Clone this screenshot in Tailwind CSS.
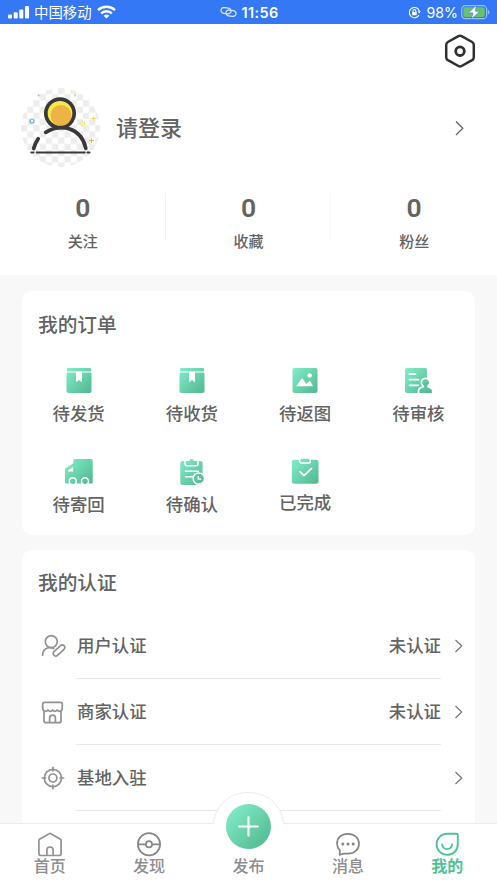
<!DOCTYPE html>
<html lang="zh-CN">
<head>
<meta charset="utf-8">
<meta name="viewport" content="width=device-width, initial-scale=1">
<title>我的</title>
<script src="https://cdn.jsdelivr.net/npm/@tailwindcss/browser@4"></script>
</head>
<body class="h-[883px] overflow-hidden bg-[#f8f8f8] font-['Noto_Sans_CJK_SC',sans-serif] font-medium text-[#636363]">
<svg class="absolute size-0" aria-hidden="true">
  <defs>
    <linearGradient id="g" x1="0" y1="0" x2="28" y2="28" gradientUnits="userSpaceOnUse"><stop offset="0.1" stop-color="#80ebc8"/><stop offset="0.9" stop-color="#54bb92"/></linearGradient>
    <pattern id="chk" width="12.4" height="12.4" patternUnits="userSpaceOnUse"><rect width="12.4" height="12.4" fill="#fff"/><path d="M0 0h6.2v6.2H0zM6.2 6.2h6.2v6.2H6.2z" fill="#ededed"/></pattern>
    <clipPath id="av"><circle cx="39.5" cy="39.5" r="39.5"/></clipPath>
  </defs>
</svg>
<div class="relative flex h-[883px] flex-col overflow-hidden">
  <!-- status bar -->
  <div class="flex h-6 shrink-0 items-center bg-[#3478f6] text-white">
    <div class="flex flex-1 items-center pl-2">
      <svg class="h-[13px] w-[21px]" viewBox="0 0 21 13" fill="#fff"><rect x="0" y="8.5" width="4" height="4" rx="1"/><rect x="5.7" y="6.3" width="4" height="6.2" rx="1"/><rect x="11.3" y="3.6" width="4" height="8.9" rx="1"/><rect x="17" y="0" width="4" height="12.5" rx="1"/></svg>
      <span class="ml-[5px] text-[14.4px] leading-6 font-normal">中国移动</span>
      <svg class="ml-[5px] h-[14px] w-[19px]" viewBox="0 0 19 14" fill="none" stroke="#fff" stroke-width="2.5"><path d="M1 5.2a12.3 12.3 0 0 1 17 0M4.2 8.4a7.6 7.6 0 0 1 10.6 0"/><path d="M9.5 13.6 6.6 10.8a4.2 4.2 0 0 1 5.8 0z" fill="#fff" stroke="none"/></svg>
    </div>
    <div class="flex items-center gap-[5px]">
      <svg class="h-[10px] w-[17px]" viewBox="0 0 17 10" fill="none" stroke="#d5e3fd" stroke-width="1.3"><rect x="-5" y="-2.9" width="10" height="5.8" rx="2.9" transform="translate(6 3.7) rotate(8)"/><rect x="-5" y="-2.9" width="10" height="5.8" rx="2.9" transform="translate(11 6.2) rotate(8)"/></svg>
      <span class="pt-px font-['Inter',sans-serif] text-[14.4px] leading-[23px] font-semibold tracking-[0.4px]">11:56</span>
    </div>
    <div class="flex flex-1 items-center justify-end pr-[7px]">
      <svg class="h-[13px] w-[13px]" viewBox="0 0 13 13" fill="none" stroke="#fff" stroke-width="1.1"><path d="M11 8.9A5.1 5.1 0 1 1 11.3 5"/><path d="M9.4 5.2h3.4l-1.5 2.4z" fill="#fff" stroke="none"/><rect x="4.1" y="5.9" width="4.6" height="3.4" rx=".5" fill="#fff" stroke="none"/><path d="M5 6V4.9a1.4 1.4 0 0 1 2.8 0V6"/></svg>
      <span class="ml-1.5 pt-px font-['Inter',sans-serif] text-[14.2px] leading-[23px] font-normal">98%</span>
      <svg class="ml-[3px] h-[16px] w-[29px]" viewBox="0 0 29 16" fill="none"><rect x=".7" y="1.7" width="25" height="13" rx="3.8" stroke="#9dbffb" stroke-width="1.2"/><rect x="2.3" y="3.3" width="21.4" height="9.8" rx="2.3" fill="#65c466"/><path d="M27 6v4.5q1.4-.6 1.4-2.2T27 6z" fill="#9dbffb"/><path d="M15.4 1.2 7.3 9h4.7l-1.6 6L18.9 7.2h-4.6z" fill="#fff" stroke="#3478f6" stroke-width=".6"/></svg>
    </div>
  </div>

  <!-- profile -->
  <header class="h-[251px] shrink-0 bg-white">
    <div class="flex h-[64px] justify-end pt-[10px] pr-[20px]">
      <svg class="size-[34px]" viewBox="0 0 34 34" fill="none" stroke="#303030"><path d="M15.4 2.2q1.6-.9 3.2 0l10.5 5.8q1.7 1 1.7 2.9v12.4q0 1.900-1.700 2.900L18.600 32q-1.600.9-3.200 0L4.900 26.200q-1.700-1-1.700-2.900V10.900q0-1.900 1.700-2.900z" stroke-width="2.500"/><circle cx="17" cy="17.200" r="4.300" stroke-width="2.800"/></svg>
    </div>
    <div class="flex h-[79px] items-center pr-[32px] pl-[21px]">
      <svg class="size-[79px]" viewBox="0 0 79 79" fill="none" stroke-linecap="round">
        <g clip-path="url(#av)"><rect width="79" height="79" fill="url(#chk)"/></g>
        <circle cx="39" cy="25.300" r="14.200" fill="#f8e94a" stroke="#3a3838" stroke-width="3.700"/>
        <circle cx="40" cy="27.500" r="10.500" fill="#edb344"/>
        <path d="M24.700 44.300C40 35.500 60 39 64.800 60.300M17.200 50.800Q14 55.500 12.700 60.500" stroke="#3a3838" stroke-width="3.700"/>
        <path d="M15.700 64.500h48M10.300 64.500h2.200M66.500 64.500h2" stroke="#3a3838" stroke-width="2"/>
        <circle cx="11" cy="33" r="2" stroke="#59aef0" stroke-width="1.200" fill="#fff"/>
        <circle cx="61.500" cy="35.500" r="2.200" stroke="#f5e95a" stroke-width="1.700" stroke-dasharray="1.700 1" stroke-linecap="butt"/>
        <path d="M71 30.500h3.400M72.700 28.800v3.400" stroke="#f4dc40" stroke-width="1.200"/>
        <path d="M68.500 52.500h4M70.500 50.500v4" stroke="#efb04f" stroke-width="1.200"/>
        <circle cx="17.700" cy="7.400" r="1" fill="#efb04f"/><circle cx="54" cy="7.400" r="1.100" fill="#f4dc40"/>
      </svg>
      <span class="-mt-[3px] ml-4 text-[22px] leading-8">请登录</span>
      <svg class="ml-auto h-[16px] w-[11px]" viewBox="0 0 11 16" fill="none" stroke="#616161" stroke-width="1.300"><path d="M2 1.500 8.800 8.300 2 15"/></svg>
    </div>
    <div class="mt-[26px] grid grid-cols-3 text-center">
      <div class="relative"><div class="font-['Roboto',sans-serif] text-[26.500px] leading-[29px] font-semibold">0</div><div class="mt-[7px] text-[15px] leading-[24px]">关注</div><i class="absolute top-0 right-0 h-[47px] w-px bg-[#f2f2f2]"></i></div>
      <div class="relative"><div class="font-['Roboto',sans-serif] text-[26.500px] leading-[29px] font-semibold">0</div><div class="mt-[7px] text-[15px] leading-[24px]">收藏</div><i class="absolute top-0 right-0 h-[47px] w-px bg-[#f6f6f6]"></i></div>
      <div><div class="font-['Roboto',sans-serif] text-[26.500px] leading-[29px] font-semibold">0</div><div class="mt-[7px] text-[15px] leading-[24px]">粉丝</div></div>
    </div>
  </header>

  <!-- orders -->
  <section class="mx-[22px] mt-4 h-[244px] shrink-0 rounded-[10px] bg-white pt-[18px]">
    <h2 class="pl-4 text-[19.700px] leading-[30px] font-medium">我的订单</h2>
    <div class="mt-[27px] grid grid-cols-4 text-center text-[17.400px] leading-[26px]">
      <div class="flex h-[91px] flex-col items-center">
        <svg class="size-7" viewBox="0 0 28 28" fill="url(#g)"><path d="M3 2h22q1 0 1 1v1.400q0 1-1 1H3q-1 0-1-1V3q0-1 1-1z"/><path d="M3 6.600h22q1.500 0 1.500 1.500V25q0 2-2 2h-21q-2 0-2-2V8.100q0-1.500 1.500-1.500z"/><path d="M11 5.800h6v10.400l-3-2.200-3 2.200z" fill="#fff"/></svg>
        <span class="mt-[6px]">待发货</span>
      </div>
      <div class="flex h-[91px] flex-col items-center">
        <svg class="size-7" viewBox="0 0 28 28" fill="url(#g)"><path d="M3 2h22q1 0 1 1v1.400q0 1-1 1H3q-1 0-1-1V3q0-1 1-1z"/><path d="M3 6.600h22q1.500 0 1.500 1.500V25q0 2-2 2h-21q-2 0-2-2V8.100q0-1.500 1.500-1.500z"/><path d="M11 5.800h6v10.400l-3-2.200-3 2.200z" fill="#fff"/></svg>
        <span class="mt-[6px]">待收货</span>
      </div>
      <div class="flex h-[91px] flex-col items-center">
        <svg class="size-7" viewBox="0 0 28 28" fill="url(#g)"><rect x="1.500" y="2" width="25" height="25" rx="2"/><path d="M5.300 20.300 10.500 12.800q.5-.7 1 0l4 5.200 2.800-3q.5-.5 1 0l2.700 5.300z" fill="#fff"/><circle cx="18.700" cy="9.500" r="2.200" fill="#fff"/></svg>
        <span class="mt-[6px]">待返图</span>
      </div>
      <div class="flex h-[91px] flex-col items-center">
        <svg class="size-7" viewBox="0 0 28 28" fill="url(#g)"><path d="M3 2h18q2 0 2 2v21q0 2-2 2H3q-2 0-2-2V4q0-2 2-2z"/><path d="M5.500 8h6M5.500 13.700h9M5.500 19.300h9" stroke="#fff" stroke-width="1.800" stroke-linecap="round"/><path d="M21.500 12.400a4 4 0 0 1 3 6.900l-.7 1.300 3.500 1.600q1.300.7 1.300 2.500V27.800H14.500v-3.100q0-1.800 1.300-2.500l3.500-1.600-.7-1.300a4 4 0 0 1 2.900-6.900z" stroke="#fff" stroke-width="1.600"/></svg>
        <span class="mt-[6px]">待审核</span>
      </div>
      <div class="flex h-[91px] flex-col items-center">
        <svg class="size-7" viewBox="0 0 28 28" fill="url(#g)"><path d="M10 2h16q1.700 0 1.700 1.700v21.500q0 1.300-1.300 1.300H1.500Q0 26.500 0 25V12.500q0-1 .8-1.500L8.300 6.500V3.700Q8.300 2 10 2z"/><path d="M3 13.600 8.200 9.800v4.700H3z" fill="#fff"/><circle cx="7.800" cy="24.200" r="3.500" stroke="#fff" stroke-width="1.500"/><circle cx="20" cy="24.200" r="3.500" stroke="#fff" stroke-width="1.500"/></svg>
        <span class="mt-[6px]">待寄回</span>
      </div>
      <div class="flex h-[91px] flex-col items-center">
        <svg class="size-7" viewBox="0 0 28 28" fill="url(#g)"><rect x="2.300" y="4" width="22.300" height="24" rx="2.500"/><path d="M7 3.200v3.500q0 2 2 2h9q2 0 2-2V3.200" fill="none" stroke="#fff" stroke-width="1.500"/><path d="M9 4h2.200Q11.500 2 13.500 2T16 4h2.400v3.300H9z"/><path d="M7.500 14.300h13M7.500 19.700h7" stroke="#fff" stroke-width="1.500" stroke-linecap="round"/><circle cx="20.800" cy="21.600" r="5.700" stroke="#fff" stroke-width="1.500"/><path d="M20.300 18.900v3.300h2.900" fill="none" stroke="#fff" stroke-width="1.300"/></svg>
        <span class="mt-[6px]">待确认</span>
      </div>
      <div class="flex h-[91px] flex-col items-center">
        <svg class="size-7" viewBox="0 0 28 28" fill="url(#g)"><rect x=".8" y="2.800" width="26.700" height="24" rx="2.500"/><path d="M8.700 2v2.500q0 1.500 1.500 1.500h7.600q1.500 0 1.500-1.500V2" fill="none" stroke="#fff" stroke-width="1.500"/><rect x="9.800" y="1.700" width="8.400" height="3" rx=".7"/><path d="m9 14.600 4 4.100 7.600-7.400" fill="none" stroke="#fff" stroke-width="1.700" stroke-linecap="round" stroke-linejoin="round"/></svg>
        <span class="mt-[4px]">已完成</span>
      </div>
    </div>
  </section>

  <!-- verification -->
  <section class="mx-[22px] mt-[15px] min-h-0 flex-1 rounded-t-[10px] bg-white pt-[17px]">
    <h2 class="pl-4 text-[19.700px] leading-[30px] font-medium">我的认证</h2>
    <ul class="mt-4 pr-3 pl-[18px] text-[17.400px]">
      <li class="flex h-[66px]">
        <svg class="mt-[21px] size-[26px]" viewBox="0 0 26 26" fill="none" stroke="#929292" stroke-width="1.700" stroke-linecap="round"><circle cx="11.300" cy="7.600" r="6"/><path d="M2.600 21.200c0-4.200 2.600-7.500 6.600-7.600 2-.1 3.500.2 4.500.9"/><rect x="-7" y="-2.500" width="14" height="5" rx="2.500" transform="translate(19 16.500) rotate(-43)"/></svg>
        <div class="mr-[22px] ml-[10px] flex flex-1 items-center justify-between border-b border-[#e8e8e8]"><span class="pl-px">用户认证</span><span>未认证</span></div>
        <svg class="absolute right-[33px] mt-[26px] h-[14px] w-[10px]" viewBox="0 0 10 14" fill="none" stroke="#707070" stroke-width="1.100"><path d="m1.500 1 6.200 6-6.200 6"/></svg>
      </li>
      <li class="flex h-[66px]">
        <svg class="mt-[21px] size-[26px]" viewBox="0 0 26 26" fill="none" stroke="#929292" stroke-width="1.700" stroke-linecap="round" stroke-linejoin="round"><path d="M4.600 2.400h15.800q1.900 0 1.900 1.900v3.700q0 3.300-2.600 3.300-1.800 0-2.700-1.300-1.200 1.300-2.300 1.300t-2.100-1.300q-1 1.300-2.200 1.300T8 10q-.9 1.300-2.700 1.300-2.600 0-2.600-3.300V4.300q0-1.900 1.900-1.900z"/><path d="M4 11.800v8.900q0 2 2 2h13q2 0 2-2v-8.900M9.600 22.500v-4.400a2.900 2.900 0 0 1 5.800 0v4.400"/></svg>
        <div class="mr-[22px] ml-[10px] flex flex-1 items-center justify-between border-b border-[#e8e8e8]"><span class="pl-px">商家认证</span><span>未认证</span></div>
        <svg class="absolute right-[33px] mt-[26px] h-[14px] w-[10px]" viewBox="0 0 10 14" fill="none" stroke="#707070" stroke-width="1.100"><path d="m1.500 1 6.200 6-6.200 6"/></svg>
      </li>
      <li class="flex h-[66px]">
        <svg class="mt-[20px] size-[26px]" viewBox="0 0 26 26" fill="none" stroke="#929292" stroke-width="1.700" stroke-linecap="round"><circle cx="12.900" cy="13" r="8.600"/><circle cx="12.900" cy="13" r="4"/><path d="M12.900 2.300v3.500M12.900 20.200v3.500M2.200 13h3.500M20.100 13h3.500"/></svg>
        <div class="mr-[22px] ml-[10px] flex flex-1 items-center justify-between border-b border-[#e8e8e8]"><span class="pl-px">基地入驻</span></div>
        <svg class="absolute right-[33px] mt-[26px] h-[14px] w-[10px]" viewBox="0 0 10 14" fill="none" stroke="#707070" stroke-width="1.100"><path d="m1.500 1 6.200 6-6.200 6"/></svg>
      </li>
    </ul>
  </section>

  <!-- tab bar -->
  <nav class="absolute inset-x-0 bottom-0 grid h-[60px] grid-cols-5 bg-white text-[16px] leading-[22px] text-[#8e8e8e]">
    <svg class="absolute top-[-33px] left-0 h-[36px] w-[497px]" viewBox="0 0 497 36" fill="#fff" stroke="#ebebf2"><path d="M-2 33.500H213.300C216 14 230 2.500 248.500 2.500S281 14 283.700 33.500H499V38H-2z"/></svg>
    <div class="relative flex flex-col items-center pt-[8px]">
      <svg class="h-[26px] w-[26px]" viewBox="0 0 26 26" fill="none" stroke="#929292" stroke-width="1.700" stroke-linejoin="round"><path d="M12.200 2.700q.8-.5 1.600 0l9.300 5.300q1 .6 1 1.800V22.500q0 2-2 2H3.900q-2 0-2-2V9.800q0-1.200 1-1.800z"/><path d="M9.900 24.500v-5.400a3.100 3.100 0 0 1 6.200 0v5.400"/></svg>
      <span class="-mt-[3px]">首页</span>
    </div>
    <div class="flex flex-col items-center pt-[8px]">
      <svg class="h-[26px] w-[26px]" viewBox="0 0 26 26" fill="none" stroke="#868686" stroke-width="1.700"><circle cx="13" cy="13.300" r="11.100"/><circle cx="13" cy="13.300" r="3.100"/><path d="M2 13.300h7.800M16.200 13.300H24"/></svg>
      <span class="-mt-[3px]">发现</span>
    </div>
    <div class="relative flex flex-col items-center pt-[31px]">
      <svg class="absolute top-[-19px] size-[45px]" viewBox="0 0 28 28" fill="url(#g)"><circle cx="14" cy="14" r="14"/><path d="M14 8.200v11.600M8.200 14h11.600" stroke="#fff" stroke-width="1.300" stroke-linecap="round"/></svg>
      <span>发布</span>
    </div>
    <div class="flex flex-col items-center pt-[8px]">
      <svg class="h-[26px] w-[26px]" viewBox="0 0 26 26" fill="none" stroke="#868686" stroke-width="1.700" stroke-linejoin="round"><path d="M4.800 19.200A10 10 0 0 1 2 12.700C2 6.600 6.700 2.800 13 2.800s11 4 11 9.900-4.700 9.900-11 9.900H10q-2.600 0-4.800 1.200-.8.300-.6-.6.600-2 .2-4z"/><g fill="#868686" stroke="none"><circle cx="7.800" cy="12.900" r="1.500"/><circle cx="13" cy="12.900" r="1.500"/><circle cx="18.200" cy="12.900" r="1.500"/></g></svg>
      <span class="-mt-[3px]">消息</span>
    </div>
    <div class="flex flex-col items-center pt-[8px] text-[#4fc397]">
      <svg class="h-[26px] w-[26px]" viewBox="0 0 26 26" fill="none" stroke="#4fc397" stroke-width="1.900" stroke-linecap="round"><path d="M13 2.700h9.500q1.300 0 1.300 1.300V13.200A10.600 10.600 0 1 1 13 2.700z"/><path d="M8 13.400q1 4.700 5.100 4.700t5.100-4.700"/></svg>
      <span class="-mt-[3px] font-bold">我的</span>
    </div>
  </nav>
</div>
</body>
</html>
